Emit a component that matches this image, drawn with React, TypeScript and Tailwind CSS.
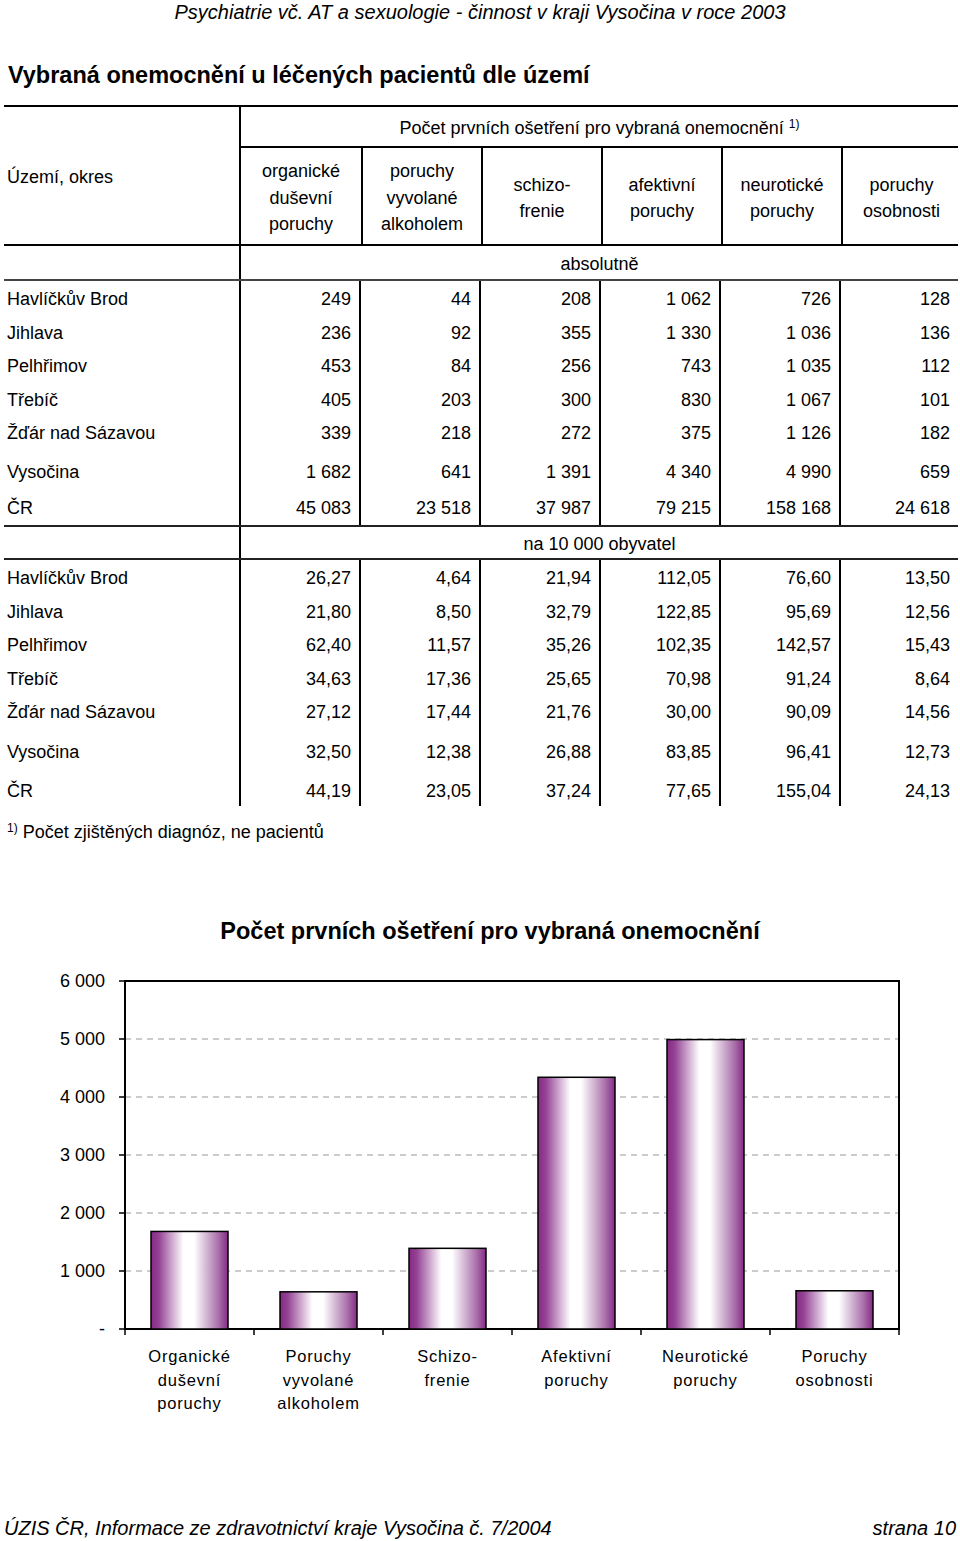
const cols = [
  ["organické", "duševní", "poruchy"],
  ["poruchy", "vyvolané", "alkoholem"],
  ["schizo-", "frenie"],
  ["afektivní", "poruchy"],
  ["neurotické", "poruchy"],
  ["poruchy", "osobnosti"],
];

const absolute = [
  ["Havlíčkův Brod", "249", "44", "208", "1 062", "726", "128"],
  ["Jihlava", "236", "92", "355", "1 330", "1 036", "136"],
  ["Pelhřimov", "453", "84", "256", "743", "1 035", "112"],
  ["Třebíč", "405", "203", "300", "830", "1 067", "101"],
  ["Žďár nad Sázavou", "339", "218", "272", "375", "1 126", "182"],
  ["Vysočina", "1 682", "641", "1 391", "4 340", "4 990", "659"],
  ["ČR", "45 083", "23 518", "37 987", "79 215", "158 168", "24 618"],
];

const relative = [
  ["Havlíčkův Brod", "26,27", "4,64", "21,94", "112,05", "76,60", "13,50"],
  ["Jihlava", "21,80", "8,50", "32,79", "122,85", "95,69", "12,56"],
  ["Pelhřimov", "62,40", "11,57", "35,26", "102,35", "142,57", "15,43"],
  ["Třebíč", "34,63", "17,36", "25,65", "70,98", "91,24", "8,64"],
  ["Žďár nad Sázavou", "27,12", "17,44", "21,76", "30,00", "90,09", "14,56"],
  ["Vysočina", "32,50", "12,38", "26,88", "83,85", "96,41", "12,73"],
  ["ČR", "44,19", "23,05", "37,24", "77,65", "155,04", "24,13"],
];

// district rows, region row and country row heights (first block / second block)
const rowsA = [
  "h-[34px] pt-[2px]",
  "h-[33px] pt-[2px]",
  "h-[34px] pt-[2px]",
  "h-[33px] pt-[2px]",
  "h-[34px] pt-[2px]",
  "h-[38px] pt-[7px]",
  "h-[38px] pt-[4px]",
];
const rowsB = [
  "h-[34px] pt-[2px]",
  "h-[33px] pt-[2px]",
  "h-[34px] pt-[2px]",
  "h-[33px] pt-[2px]",
  "h-[34px] pt-[2px]",
  "h-[39px] pt-[8px]",
  "h-[39px] pt-[8px]",
];

function DataRow({ row, cls }: { row: string[]; cls: string }) {
  return (
    <div className="grid grid-cols-[235px_repeat(5,120px)_119px]">
      <div className={`flex items-center pl-[3px] ${cls}`}>{row[0]}</div>
      {row.slice(1).map((v, i) => (
        <div key={i} className={`flex items-center justify-end border-l-2 border-black pr-[8px] ${cls}`}>
          {v}
        </div>
      ))}
    </div>
  );
}

function Block({ rows, heights }: { rows: string[][]; heights: string[] }) {
  return (
    <div>
      {rows.map((r, i) => (
        <DataRow key={r[0]} row={r} cls={heights[i]} />
      ))}
    </div>
  );
}

const values = [1682, 641, 1391, 4340, 4990, 659];
const labels = [
  ["Organické", "duševní", "poruchy"],
  ["Poruchy", "vyvolané", "alkoholem"],
  ["Schizo-", "frenie"],
  ["Afektivní", "poruchy"],
  ["Neurotické", "poruchy"],
  ["Poruchy", "osobnosti"],
];

function Chart() {
  const left = 125;
  const right = 899;
  const top = 30;
  const bottom = 378;
  const step = (right - left) / 6;
  const scale = (bottom - top) / 6000;
  const ticks = ["-", "1 000", "2 000", "3 000", "4 000", "5 000", "6 000"];
  return (
    <svg width="960" height="470" viewBox="0 0 960 470" className="mt-[6px] block">
      <defs>
        <linearGradient id="bar" x1="0" x2="1" y1="0" y2="0">
          <stop offset="0" stopColor="#862a86" />
          <stop offset="0.1" stopColor="#944294" />
          <stop offset="0.42" stopColor="#ffffff" />
          <stop offset="0.56" stopColor="#ffffff" />
          <stop offset="0.88" stopColor="#a86ea8" />
          <stop offset="1" stopColor="#862a86" />
        </linearGradient>
      </defs>
      {ticks.map((t, i) => {
        const y = bottom - i * 1000 * scale;
        return (
          <g key={t}>
            {i > 0 && i < 6 && (
              <line x1={left} x2={right} y1={y} y2={y} stroke="#999" strokeWidth="1" strokeDasharray="6 5" />
            )}
            <line x1={left - 6} x2={left} y1={y} y2={y} stroke="#000" strokeWidth="1.5" />
            <text x={105} y={y + 6} textAnchor="end" fontSize="18" fontFamily="Liberation Sans, sans-serif" fill="#000">
              {t}
            </text>
          </g>
        );
      })}
      <rect x={left} y={top} width={right - left} height={bottom - top} fill="none" stroke="#000" strokeWidth="2" />
      {values.map((v, i) => {
        const h = v * scale;
        const x = left + i * step + (step - 77) / 2;
        return (
          <rect key={i} x={x} y={bottom - h} width="77" height={h} fill="url(#bar)" stroke="#000" strokeWidth="1.5" />
        );
      })}
      {Array.from({ length: 7 }).map((_, i) => (
        <line key={i} x1={left + i * step} x2={left + i * step} y1={bottom} y2={bottom + 6} stroke="#000" strokeWidth="1.5" />
      ))}
      {labels.map((ls, i) => (
        <text key={i} textAnchor="middle" fontSize="16.5" letterSpacing="0.8" fontFamily="Liberation Sans, sans-serif" fill="#000">
          {ls.map((l, j) => (
            <tspan key={j} x={left + i * step + step / 2} y={411 + j * 23.5}>
              {l}
            </tspan>
          ))}
        </text>
      ))}
    </svg>
  );
}

export default function App() {
  return (
    <div className="h-[1541px] w-[960px] bg-white font-['Liberation_Sans',sans-serif] text-[18px] leading-[24px] text-black">
      <div className="text-center text-[20px] italic">Psychiatrie vč. AT a sexuologie - činnost v kraji Vysočina v roce 2003</div>
      <h1 className="mt-[36px] pl-[8px] text-[23.5px] font-bold leading-[30px]">
        Vybraná onemocnění u léčených pacientů dle území
      </h1>

      <div className="mt-[15px] ml-[4px] w-[954px] border-t-2 border-black">
        <div className="grid grid-cols-[235px_719px] border-b-2 border-black">
          <div className="flex items-center pl-[3px] pt-[2px]">Území, okres</div>
          <div className="border-l-2 border-black">
            <div className="flex h-[41px] items-center justify-center border-b-2 border-black pt-[2px]">
              <span>
                Počet prvních ošetření pro vybraná onemocnění <sup className="text-[12px]">1)</sup>
              </span>
            </div>
            <div className="grid grid-cols-[repeat(5,120px)_119px]">
              {cols.map((c, i) => (
                <div
                  key={i}
                  className={`flex h-[96px] flex-col items-center justify-center pt-[4px] leading-[26.5px] ${i > 0 ? "border-l-2 border-black" : ""}`}
                >
                  {c.map((l) => (
                    <span key={l}>{l}</span>
                  ))}
                </div>
              ))}
            </div>
          </div>
        </div>

        <div className="grid grid-cols-[235px_719px] border-b-2 border-[#444]">
          <div />
          <div className="flex h-[33px] items-center justify-center border-l-2 border-black pt-[2px]">absolutně</div>
        </div>
        <Block rows={absolute} heights={rowsA} />
        <div className="grid grid-cols-[235px_719px] border-y-2 border-[#222]">
          <div />
          <div className="flex h-[31px] items-center justify-center border-l-2 border-black pt-[3px]">na 10 000 obyvatel</div>
        </div>
        <Block rows={relative} heights={rowsB} />
      </div>

      <div className="mt-[14px] pl-[7px]">
        <sup className="text-[12px]">1)</sup> Počet zjištěných diagnóz, ne pacientů
      </div>

      <h2 className="mt-[73px] pl-[20px] text-center text-[23.5px] font-bold leading-[28px]">
        Počet prvních ošetření pro vybraná onemocnění
      </h2>
      <Chart />

      <div className="mt-[95px] flex justify-between px-[4px] text-[20px] italic">
        <span>ÚZIS ČR, Informace ze zdravotnictví kraje Vysočina č. 7/2004</span>
        <span>strana 10</span>
      </div>
    </div>
  );
}
